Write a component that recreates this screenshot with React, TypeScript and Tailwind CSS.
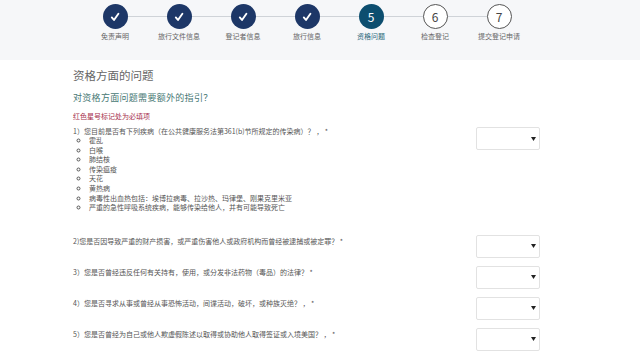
import React from 'react';

const steps = [
    { label: '免责声明', state: 'done' },
    { label: '旅行文件信息', state: 'done' },
    { label: '登记者信息', state: 'done' },
    { label: '旅行信息', state: 'done' },
    { label: '资格问题', state: 'current', num: '5' },
    { label: '检查登记', state: 'todo', num: '6' },
    { label: '提交登记申请', state: 'todo', num: '7' },
];

const diseases = [
    '霍乱',
    '白喉',
    '肺结核',
    '传染瘟疫',
    '天花',
    '黄热病',
    '病毒性出血热包括：埃博拉病毒、拉沙热、玛律堡、刚果克里米亚',
    '严重的急性呼吸系统疾病，能够传染给他人，并有可能导致死亡',
];

const questions = [
    '2)您是否因导致严重的财产损害，或严重伤害他人或政府机构而曾经被逮捕或被定罪？ *',
    '3）您是否曾经违反任何有关持有，使用，或分发非法药物（毒品）的法律？ *',
    '4）您是否寻求从事或曾经从事恐怖活动，间谍活动，破坏，或种族灭绝？ ， *',
    '5）您是否曾经为自己或他人欺虚假陈述以取得或协助他人取得签证或入境美国？ ， *',
];

function Check() {
    return (
        <svg width="12" height="12" viewBox="0 0 12 12" fill="none">
            <path d="M2.8 6.4 L5 9 L9.4 2.8" stroke="white" strokeWidth="1.9" strokeLinecap="round" strokeLinejoin="round" />
        </svg>
    );
}

function StepCircle({ state, num }: { state: string; num?: string }) {
    if (state === 'done') {
        return (
            <div className="w-[25px] h-[25px] rounded-full bg-[#1d3767] flex items-center justify-center">
                <Check />
            </div>
        );
    }
    if (state === 'current') {
        return (
            <div className="w-[25px] h-[25px] rounded-full bg-[#0d4e6f] flex items-center justify-center text-white text-[12px] leading-none">
                {num}
            </div>
        );
    }
    return (
        <div className="w-[25px] h-[25px] rounded-full bg-white border border-[#555] flex items-center justify-center text-[#444] text-[12px] leading-none">
            {num}
        </div>
    );
}

function SelectBox({ className = '' }: { className?: string }) {
    return (
        <div className={`w-[64px] h-[23px] shrink-0 bg-white border border-[#e2e2e2] rounded-[2px] flex items-center justify-end pr-[3px] ${className}`}>
            <svg width="5" height="4" viewBox="0 0 5 4">
                <path d="M0 0 L5 0 L2.5 4 Z" fill="#222" />
            </svg>
        </div>
    );
}

export default function App() {
    return (
        <div className="w-[640px] h-[358px] bg-white overflow-hidden font-['Noto_Sans_CJK_SC','Noto_Sans',sans-serif]">
            {/* Step header */}
            <div className="h-[60px] bg-[#f6f7f9] pt-[4px]">
                <div className="relative flex ml-[83px] w-[448px]">
                    <div className="absolute left-[32px] right-[32px] top-[12px] h-px bg-[#cfd3d8]" />
                    {steps.map((s) => (
                        <div key={s.label} className="relative w-[64px] flex flex-col items-center">
                            <StepCircle state={s.state} num={s.num} />
                            <span
                                className={`mt-[3px] text-[7px] leading-[9px] whitespace-nowrap ${
                                    s.state === 'current' ? 'text-[#2d6a7e]' : 'text-[#666]'
                                }`}
                            >
                                {s.label}
                            </span>
                        </div>
                    ))}
                </div>
            </div>

            {/* Content */}
            <div className="ml-[73px] w-[467px] pt-[7px]">
                <h1 className="text-[11.5px] leading-[16px] text-[#666] font-normal">资格方面的问题</h1>
                <h2 className="mt-[9px] text-[9px] leading-[12px] tracking-[0.3px] text-[#467874] font-normal">
                    对资格方面问题需要额外的指引？
                </h2>
                <p className="mt-[7px] text-[7px] leading-[10px] text-[#a6304c]">红色星号标记处为必填项</p>

                <div className="mt-[2px] flex justify-between items-start">
                    <div className="text-[7px] leading-[9.6px] text-[#555] pt-[3px]">
                        <p className="leading-[10px]">1）您目前是否有下列疾病（在公共健康服务法第361(b)节所规定的传染病）？ ， *</p>
                        <ul className="list-[circle] pl-[16px] text-[#555]">
                            {diseases.map((d) => (
                                <li key={d} className="h-[9.6px] leading-[9.6px]">{d}</li>
                            ))}
                        </ul>
                    </div>
                    <SelectBox className="mt-[4px]" />
                </div>

                <div className="mt-[22px] flex flex-col gap-[8px]">
                    {questions.map((q) => (
                        <div key={q} className="flex justify-between items-start">
                            <p className="text-[7px] leading-[9.6px] text-[#555] pt-[2px]">{q}</p>
                            <SelectBox />
                        </div>
                    ))}
                </div>
            </div>
        </div>
    );
}
